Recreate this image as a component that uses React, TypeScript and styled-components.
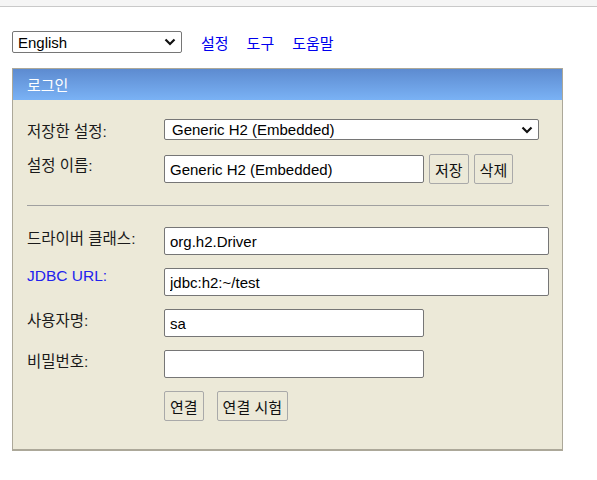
import React from 'react';
import styled, { createGlobalStyle } from 'styled-components';

const GlobalStyle = createGlobalStyle`
  html, body {
    margin: 0;
    padding: 0;
    background: #fff;
    font-family: "Liberation Sans", "Noto Sans CJK KR", sans-serif;
    font-size: 15px;
    color: #1a1a1a;
  }
`;

const FONT = `"Liberation Sans", "Noto Sans CJK KR", sans-serif`;

const TopStrip = styled.div`
  height: 6px;
  background: #f5f5f5;
  border-bottom: 1px solid #c9c9c9;
`;

const Page = styled.div`
  padding: 24px 0 0 12px;
`;

const Toolbar = styled.div`
  display: flex;
  align-items: center;
  height: 22px;
`;

const Links = styled.div`
  display: flex;
  gap: 18px;
  margin-left: 19px;
`;

const NavLink = styled.a`
  color: #0000ee;
  text-decoration: none;
  font-size: 15px;
  cursor: pointer;
`;

const SelectWrap = styled.div<{ $width: number; $height: number }>`
  position: relative;
  width: ${p => p.$width}px;
  height: ${p => p.$height}px;
`;

const Select = styled.select<{ $pad: number }>`
  appearance: none;
  -webkit-appearance: none;
  box-sizing: border-box;
  width: 100%;
  height: 100%;
  margin: 0;
  padding: 0 24px 0 ${p => p.$pad}px;
  border: 1px solid #767676;
  border-radius: 2px;
  background: #fff;
  font-family: ${FONT};
  font-size: 15px;
  color: #000;
  outline: none;
`;

const Chevron = styled.svg`
  position: absolute;
  right: 6px;
  top: 50%;
  transform: translateY(-50%);
  pointer-events: none;
`;

const Panel = styled.div`
  margin-top: 15px;
  width: 549px;
  background: #ece9d8;
  border: 1px solid #aca899;
  border-bottom: 2px solid #aca899;
`;

const PanelHeader = styled.div`
  height: 31px;
  display: flex;
  align-items: center;
  padding-left: 14px;
  color: #fff;
  font-size: 15px;
  background: linear-gradient(to bottom, #5d8bd0, #7ab2f5);
`;

const Form = styled.div`
  display: flex;
  flex-direction: column;
  gap: 13px;
  padding: 19px 13px 28px 14px;
`;

const Row = styled.div`
  display: flex;
  align-items: flex-start;
`;

const Label = styled.label<{ $link?: boolean; $top?: number }>`
  width: 137px;
  flex: none;
  margin-top: ${p => p.$top ?? -1}px;
  font-size: 15.5px;
  color: ${p => (p.$link ? '#2222ee' : '#1a1a1a')};
`;

const Input = styled.input<{ $width: number }>`
  box-sizing: border-box;
  width: ${p => p.$width}px;
  height: 28px;
  margin: 0;
  padding: 0 5px;
  border: 1px solid #767676;
  border-radius: 2px;
  background: #fff;
  font-family: ${FONT};
  font-size: 15px;
  color: #000;
  outline: none;
`;

const Button = styled.button`
  box-sizing: border-box;
  height: 30px;
  margin: 0;
  padding: 0 5px;
  border: 1px solid #a9a9a9;
  border-radius: 2px;
  background: #ece9d8;
  font-family: ${FONT};
  font-size: 15px;
  color: #111;
`;

const Controls = styled.div<{ $gap: number }>`
  display: flex;
  align-items: center;
  gap: ${p => p.$gap}px;
`;

const Divider = styled.hr`
  margin: 8px 0;
  border: none;
  border-top: 1px solid #a0a0a0;
  height: 0;
`;

function ChevronIcon() {
  return (
    <Chevron width="12" height="8" viewBox="0 0 12 8">
      <path d="M1.5 1.5 L6 6 L10.5 1.5" fill="none" stroke="#111" strokeWidth="2.2" />
    </Chevron>
  );
}

export default function App() {
  return (
    <>
      <GlobalStyle />
      <TopStrip />
      <Page>
        <Toolbar>
          <SelectWrap $width={170} $height={22}>
            <Select $pad={5} defaultValue="en">
              <option value="en">English</option>
            </Select>
            <ChevronIcon />
          </SelectWrap>
          <Links>
            <NavLink>설정</NavLink>
            <NavLink>도구</NavLink>
            <NavLink>도움말</NavLink>
          </Links>
        </Toolbar>
        <Panel>
          <PanelHeader>로그인</PanelHeader>
          <Form>
            <Row>
              <Label $top={0}>저장한 설정:</Label>
              <SelectWrap $width={375} $height={21}>
                <Select $pad={7} defaultValue="h2">
                  <option value="h2">Generic H2 (Embedded)</option>
                </Select>
                <ChevronIcon />
              </SelectWrap>
            </Row>
            <Row>
              <Label>설정 이름:</Label>
              <Controls $gap={5}>
                <Input $width={260} defaultValue="Generic H2 (Embedded)" />
                <Button>저장</Button>
                <Button>삭제</Button>
              </Controls>
            </Row>
            <Divider />
            <Row>
              <Label>드라이버 클래스:</Label>
              <Input $width={385} defaultValue="org.h2.Driver" />
            </Row>
            <Row>
              <Label $link>JDBC URL:</Label>
              <Input $width={385} defaultValue="jdbc:h2:~/test" />
            </Row>
            <Row>
              <Label>사용자명:</Label>
              <Input $width={260} defaultValue="sa" />
            </Row>
            <Row>
              <Label>비밀번호:</Label>
              <Input $width={260} type="password" defaultValue="" />
            </Row>
            <Row>
              <Label />
              <Controls $gap={13}>
                <Button>연결</Button>
                <Button>연결 시험</Button>
              </Controls>
            </Row>
          </Form>
        </Panel>
      </Page>
    </>
  );
}
